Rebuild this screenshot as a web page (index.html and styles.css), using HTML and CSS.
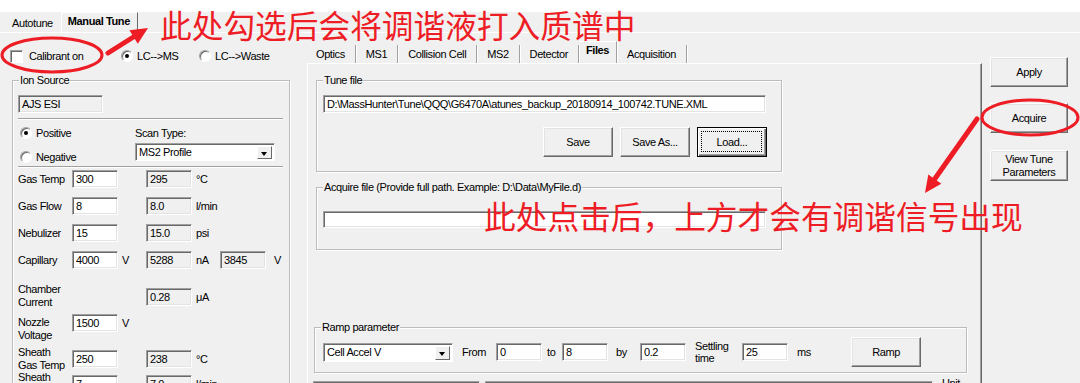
FILE: index.html
```html
<!DOCTYPE html>
<html lang="zh-CN">
<head>
    <meta charset="UTF-8">
    <title>Manual Tune</title>
    <link rel="stylesheet" href="styles.css">
</head>
<body>
<div class="app">
    <div class="tabstrip">
        <div class="tab">Autotune</div>
        <div class="tab active">Manual Tune</div>
    </div>

    <div class="main">
        <!-- left: ion source -->
        <div class="left">
            <div class="mode-row">
                <label class="opt w-cal"><span class="check"></span>Calibrant on</label>
                <label class="opt w-lc"><span class="radio on"></span>LC--&gt;MS</label>
                <label class="opt"><span class="radio"></span>LC--&gt;Waste</label>
            </div>

            <div class="group ion">
                <span class="legend">Ion Source</span>
                <div class="field ro source">AJS ESI</div>
                <div class="sep"></div>
                <div class="polarity">
                    <div class="pol-col">
                        <label class="opt"><span class="radio on"></span>Positive</label>
                        <label class="opt neg"><span class="radio"></span>Negative</label>
                    </div>
                    <div class="scan-col">
                        <span class="scan-label">Scan Type:</span>
                        <div class="combo scan"><span class="combo-text">MS2 Profile</span><span class="drop"></span></div>
                    </div>
                </div>
                <div class="sep sep2"></div>
                <div class="params">
                    <div class="prow h27">
                        <span class="plabel">Gas Temp</span>
                        <span class="field">300</span><span class="unit"></span>
                        <span class="field ro">295</span><span class="unit">°C</span>
                    </div>
                    <div class="prow h27">
                        <span class="plabel">Gas Flow</span>
                        <span class="field">8</span><span class="unit"></span>
                        <span class="field ro">8.0</span><span class="unit">l/min</span>
                    </div>
                    <div class="prow h27">
                        <span class="plabel">Nebulizer</span>
                        <span class="field">15</span><span class="unit"></span>
                        <span class="field ro">15.0</span><span class="unit">psi</span>
                    </div>
                    <div class="prow h37">
                        <span class="plabel">Capillary</span>
                        <span class="field">4000</span><span class="unit">V</span>
                        <span class="field ro">5288</span><span class="unit">nA</span>
                        <span class="field ro">3845</span><span class="unit last">V</span>
                    </div>
                    <div class="prow h26">
                        <span class="plabel two up5">Chamber<br>Current</span>
                        <span class="blank"></span>
                        <span class="field ro">0.28</span><span class="unit">μA</span>
                    </div>
                    <div class="prow h36">
                        <span class="plabel two down2">Nozzle<br>Voltage</span>
                        <span class="field">1500</span><span class="unit">V</span>
                    </div>
                    <div class="prow h25">
                        <span class="plabel two up4">Sheath<br>Gas Temp</span>
                        <span class="field">250</span><span class="unit"></span>
                        <span class="field ro">238</span><span class="unit">°C</span>
                    </div>
                    <div class="prow h30">
                        <span class="plabel two up4">Sheath<br>Gas Flow</span>
                        <span class="field">7</span><span class="unit"></span>
                        <span class="field ro">7.0</span><span class="unit">l/min</span>
                    </div>
                </div>
            </div>
        </div>

        <!-- center: files tab -->
        <div class="center">
            <div class="subtabs">
                <div class="stab">Optics</div>
                <div class="stab">MS1</div>
                <div class="stab">Collision Cell</div>
                <div class="stab">MS2</div>
                <div class="stab">Detector</div>
                <div class="stab active">Files</div>
                <div class="stab">Acquisition</div>
            </div>
            <div class="tabpanel">
                <div class="group tune">
                    <span class="legend">Tune file</span>
                    <div class="field path">D:\MassHunter\Tune\QQQ\G6470A\atunes_backup_20180914_100742.TUNE.XML</div>
                    <div class="btn-row">
                        <button class="btn">Save</button>
                        <button class="btn">Save As...</button>
                        <button class="btn focus">Load...</button>
                    </div>
                </div>

                <div class="group acquire">
                    <span class="legend">Acquire file (Provide full path. Example: D:\Data\MyFile.d)</span>
                    <div class="field path acq-path"></div>
                </div>

                <div class="group ramp">
                    <span class="legend">Ramp parameter</span>
                    <div class="ramp-row">
                        <div class="combo ramp-combo"><span class="combo-text">Cell Accel V</span><span class="drop"></span></div>
                        <span class="rl w-from">From</span>
                        <span class="field">0</span>
                        <span class="rl w-to">to</span>
                        <span class="field">8</span>
                        <span class="rl w-by">by</span>
                        <span class="field">0.2</span>
                        <span class="rl w-settle">Settling<br>time</span>
                        <span class="field">25</span>
                        <span class="rl w-ms">ms</span>
                        <button class="btn">Ramp</button>
                    </div>
                </div>

                <div class="bottom-row">
                    <span class="field box-a"></span>
                    <span class="field box-b"></span>
                    <span class="unit-head">Unit</span>
                </div>
            </div>
        </div>

        <!-- right: actions -->
        <div class="right">
            <button class="btn side">Apply</button>
            <button class="btn side acq">Acquire</button>
            <button class="btn side view">View Tune<br>Parameters</button>
        </div>
    </div>

    <svg class="marks" width="1080" height="383" viewBox="0 0 1080 383">
        <g fill="none" stroke="#ee1c24" stroke-width="3">
            <ellipse cx="52" cy="55" rx="50" ry="17"/>
            <ellipse cx="1030" cy="117.5" rx="48" ry="17.5"/>
        </g>
        <g stroke="#ee1c24" stroke-width="5" stroke-linecap="round">
            <line x1="108" y1="53" x2="135" y2="36"/>
            <line x1="977" y1="119" x2="934" y2="180"/>
        </g>
        <g fill="#ee1c24">
            <polygon points="148,28 137.8,43.8 129.4,30.2"/>
            <polygon points="925,193 941.3,183.7 928.3,174.5"/>
        </g>
    </svg>
    <div class="note note-top">此处勾选后会将调谐液打入质谱中</div>
    <div class="note note-mid">此处点击后，上方才会有调谐信号出现</div>
</div>
</body>
</html>
```

FILE: styles.css
```css
body { margin: 0; font-family: "Liberation Sans", Arial, sans-serif; font-size: 11px; color: #000; background: #f0f0f0; }
.app { position: relative; width: 1080px; height: 383px; overflow: hidden; background: #f0f0f0; letter-spacing: -0.4px; }

/* top tabs */
.tabstrip { display: flex; align-items: flex-end; height: 32px; padding-left: 5px; box-sizing: border-box; background: linear-gradient(#fff 12px, #f0f0f0 12px); }
.tab { height: 18px; line-height: 18px; padding: 0 8px 0 7px; }
.tab.active { height: 20px; box-sizing: border-box; padding: 0 7px 2px 6px; font-weight: bold; border-top: 1px solid #fff; border-left: 1px solid #fff; border-right: 1px solid #696969; line-height: 17px; }

.main { display: flex; height: 351px; border-top: 1px solid #fff; box-sizing: border-box; }
.left { width: 305px; flex: none; }
.center { width: 677px; flex: none; }
.right { flex: 1; display: flex; flex-direction: column; padding: 24px 0 0 8px; }

/* common controls */
.opt { display: flex; align-items: center; gap: 4px; line-height: 14px; }
.check { width: 13px; height: 13px; box-sizing: border-box; background: #fff; border: 1px solid; border-color: #a0a0a0 #fff #fff #a0a0a0; box-shadow: inset 1px 1px 0 #696969; flex: none; margin-right: 1px; }
.radio { position: relative; width: 12px; height: 12px; box-sizing: border-box; border-radius: 50%; background: #fff; border: 1px solid; border-color: #a0a0a0 #fff #fff #a0a0a0; box-shadow: inset 1px 1px 0 #696969; flex: none; }
.radio.on::after { content: ""; position: absolute; left: 3px; top: 3px; width: 4px; height: 4px; border-radius: 50%; background: #000; }

.field { display: block; box-sizing: border-box; width: 46px; height: 18px; flex: none; padding: 1px 3px; line-height: 14px; white-space: nowrap; overflow: hidden; background: #fff; border: 1px solid; border-color: #a0a0a0 #fff #fff #a0a0a0; box-shadow: inset 1px 1px 0 #696969, inset -1px -1px 0 #e3e3e3; }
.field.ro { background: #f0f0f0; }

.combo { display: flex; box-sizing: border-box; height: 18px; background: #fff; border: 1px solid; border-color: #a0a0a0 #fff #fff #a0a0a0; box-shadow: inset 1px 1px 0 #696969; padding: 2px 2px 1px 2px; }
.combo-text { flex: 1; line-height: 13px; padding-left: 1px; }
.drop { position: relative; width: 15px; box-sizing: border-box; background: #f0f0f0; border: 1px solid; border-color: #fff #696969 #696969 #fff; }
.drop::after { content: ""; position: absolute; left: 3px; top: 5px; border-left: 3.5px solid transparent; border-right: 3.5px solid transparent; border-top: 4px solid #000; }

.btn { position: relative; box-sizing: border-box; width: 70px; height: 30px; padding: 0; font: inherit; letter-spacing: inherit; color: #000; background: #f0f0f0; border: 1px solid; border-color: #fff #696969 #696969 #fff; box-shadow: inset -1px -1px 0 #a0a0a0, inset 1px 1px 0 #e3e3e3; }
.btn.focus { border-color: #000; box-shadow: inset 1px 1px 0 #fff, inset -1px -1px 0 #696969, inset -2px -2px 0 #a0a0a0; }
.btn.focus::after { content: ""; position: absolute; left: 3px; top: 3px; right: 4px; bottom: 4px; border: 1px dotted #000; }

.group { position: relative; box-sizing: border-box; border: 1px solid #bcbcbc; box-shadow: inset 1px 1px 0 #fff, 1px 1px 0 #fff; }
.legend { position: absolute; top: -7px; left: 6px; padding: 0 1px; line-height: 12px; background: #f0f0f0; white-space: nowrap; }

/* left panel */
.mode-row { display: flex; align-items: center; height: 14px; margin-top: 16px; padding-left: 10px; }
.w-cal { width: 111px; gap: 5px; }
.w-lc { width: 78px; }

.ion { margin: 17px 0 0 12px; width: 278px; height: 320px; padding: 14px 0 0 5px; }
.source { width: 85px; }
.sep { width: 265px; height: 0; margin-top: 5px; border-top: 1px solid #a0a0a0; border-bottom: 1px solid #fff; }
.sep2 { margin-top: 0; }
.polarity { display: flex; height: 46px; }
.pol-col { width: 115px; padding: 6px 0 0 2px; }
.neg { margin-top: 10px; }
.scan-col { display: flex; flex-direction: column; padding-top: 6px; }
.scan-label { line-height: 14px; }
.scan { width: 140px; margin-top: 3px; }

.params { padding-top: 2px; }
.prow { display: flex; align-items: flex-start; }
.h25 { height: 25px; } .h26 { height: 26px; } .h27 { height: 27px; }
.h30 { height: 30px; } .h36 { height: 36px; } .h37 { height: 37px; }
.plabel { width: 54px; flex: none; line-height: 18px; }
.plabel.two { line-height: 12.5px; }
.up5 { margin-top: -5px; } .up4 { margin-top: -4px; } .down2 { margin-top: 2px; }
.blank { width: 74px; flex: none; }
.unit { width: 28px; flex: none; box-sizing: border-box; padding-left: 4px; line-height: 18px; }
.unit.last { padding-left: 8px; }

/* center panel */
.subtabs { display: flex; align-items: flex-end; height: 30px; padding-left: 1px; }
.stab { height: 18px; line-height: 18px; padding: 0 10px; border-right: 1px solid #a0a0a0; box-shadow: 1px 0 0 #fff; }
.stab.active { height: 21px; line-height: 16px; padding: 0 7px; font-weight: bold; border-top: 1px solid #fff; }

.tabpanel { box-sizing: border-box; width: 675px; height: 320px; margin-left: 2px; padding-top: 16px; border-top: 1px solid #fff; border-left: 1px solid #fff; border-right: 1px solid #696969; box-shadow: inset -1px 0 0 #a0a0a0; }

.tune { width: 466px; height: 92px; margin-left: 8px; padding: 14px 0 0 6px; }
.path { width: 443px; }
.btn-row { display: flex; justify-content: flex-end; gap: 7px; margin-top: 14px; padding-right: 14px; }

.acquire { width: 466px; height: 63px; margin: 15px 0 0 8px; padding: 23px 0 0 6px; }
.acq-path { height: 17px; }

.ramp { width: 653px; height: 46px; margin: 77px 0 0 6px; padding: 14px 0 0 8px; }
.ramp-row { display: flex; align-items: center; height: 20px; }
.ramp-combo { width: 130px; height: 19px; }
.rl { flex: none; box-sizing: border-box; line-height: 12.5px; }
.w-from { width: 43px; padding-left: 9px; }
.w-to { width: 20px; padding-left: 5px; }
.w-by { width: 32px; padding-left: 8px; }
.w-settle { width: 56px; padding-left: 9px; }
.w-ms { width: 63px; padding-left: 9px; }
.ramp-row .btn { margin-top: -1px; }

.bottom-row { display: flex; align-items: flex-start; margin: 8px 0 0 5px; }
.box-a { width: 167px; height: 20px; }
.box-b { width: 448px; height: 20px; margin-left: 5px; }
.unit-head { margin: -4px 0 0 9px; line-height: 12px; }

/* right panel */
.side { width: 78px; }
.acq { margin-top: 16px; }
.view { height: 31px; margin-top: 17px; line-height: 13px; }

/* annotations */
.marks { position: absolute; left: 0; top: 0; pointer-events: none; }
.note { position: absolute; font-family: "Noto Sans CJK SC", sans-serif; font-size: 31.7px; line-height: 1; letter-spacing: 0; color: #ee1c24; white-space: nowrap; }
.note-top { left: 160px; top: 9px; }
.note-mid { left: 484px; top: 200px; }
```
